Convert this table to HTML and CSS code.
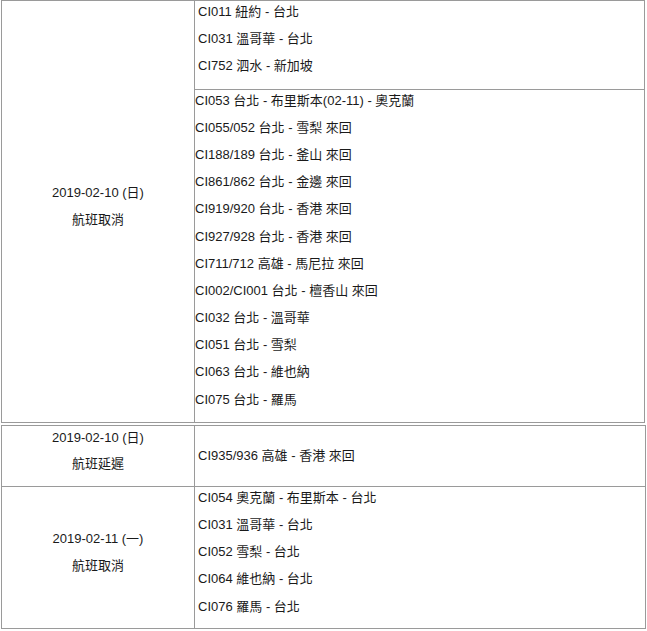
FILE: index.html
```html
<!DOCTYPE html>
<html lang="zh-Hant">
<head>
<meta charset="utf-8">
<title>航班異動</title>
<link rel="stylesheet" href="styles.css">
</head>
<body>
<div class="page">
  <div class="block block-a">
    <div class="date">
      <div class="date-line">2019-02-10 (日)</div>
      <div class="date-line">航班取消</div>
    </div>
    <div class="flights-col">
      <div class="cell cell-pad cell-sep">
        <div class="line">CI011 紐約 - 台北</div>
        <div class="line">CI031 溫哥華 - 台北</div>
        <div class="line">CI752 泗水 - 新加坡</div>
      </div>
      <div class="cell">
        <div class="line">CI053 台北 - 布里斯本(02-11) - 奧克蘭</div>
        <div class="line">CI055/052 台北 - 雪梨 來回</div>
        <div class="line">CI188/189 台北 - 釜山 來回</div>
        <div class="line">CI861/862 台北 - 金邊 來回</div>
        <div class="line">CI919/920 台北 - 香港 來回</div>
        <div class="line">CI927/928 台北 - 香港 來回</div>
        <div class="line">CI711/712 高雄 - 馬尼拉 來回</div>
        <div class="line">CI002/CI001 台北 - 檀香山 來回</div>
        <div class="line">CI032 台北 - 溫哥華</div>
        <div class="line">CI051 台北 - 雪梨</div>
        <div class="line">CI063 台北 - 維也納</div>
        <div class="line">CI075 台北 - 羅馬</div>
      </div>
    </div>
  </div>

  <div class="block block-b">
    <div class="row row-sep row-short">
      <div class="date">
        <div class="date-line">2019-02-10 (日)</div>
        <div class="date-line">航班延遲</div>
      </div>
      <div class="flights-col center">
        <div class="cell cell-pad cell-single">
          <div class="line-single">CI935/936 高雄 - 香港 來回</div>
        </div>
      </div>
    </div>
    <div class="row">
      <div class="date">
        <div class="date-line">2019-02-11 (一)</div>
        <div class="date-line">航班取消</div>
      </div>
      <div class="flights-col">
        <div class="cell cell-pad cell-c">
          <div class="line">CI054 奧克蘭 - 布里斯本 - 台北</div>
          <div class="line">CI031 溫哥華 - 台北</div>
          <div class="line">CI052 雪梨 - 台北</div>
          <div class="line">CI064 維也納 - 台北</div>
          <div class="line">CI076 羅馬 - 台北</div>
        </div>
      </div>
    </div>
  </div>
</div>
</body>
</html>
```

FILE: styles.css
```css
* {
  box-sizing: border-box;
}

html, body {
  margin: 0;
  padding: 0;
  background: #ffffff;
}

body {
  font-family: "Liberation Sans", Arial, "Noto Sans CJK TC", sans-serif;
  font-size: 13px;
  color: #1a1a1a;
}

.page {
  width: 647px;
  padding-left: 1px;
}

.block {
  border: 1px solid #9a9a9a;
}

.block-a {
  width: 644px;
  display: flex;
}

.block-b {
  width: 645px;
  margin-top: 2px;
}

.row {
  display: flex;
}

.row-sep {
  border-bottom: 1px solid #9a9a9a;
}

.row-short {
  height: 61px;
}

.date {
  width: 193px;
  flex: 0 0 193px;
  border-right: 1px solid #9a9a9a;
  display: flex;
  flex-direction: column;
  justify-content: center;
  align-items: center;
  padding-bottom: 9px;
}

.date-line {
  height: 26.5px;
  line-height: 26.5px;
  white-space: nowrap;
}

.flights-col {
  flex: 1;
  display: flex;
  flex-direction: column;
}

.flights-col.center {
  justify-content: center;
}

.cell {
  padding-bottom: 6px;
}

.cell-sep {
  border-bottom: 1px solid #9a9a9a;
  padding-bottom: 6px;
}

.cell-pad {
  padding-left: 3px;
}

.cell-c {
  padding-bottom: 5px;
}

.cell-single {
  padding-bottom: 0;
}

.line {
  height: 27.2px;
  line-height: 22px;
  white-space: nowrap;
}

.line-single {
  line-height: 20px;
  white-space: nowrap;
}
```
